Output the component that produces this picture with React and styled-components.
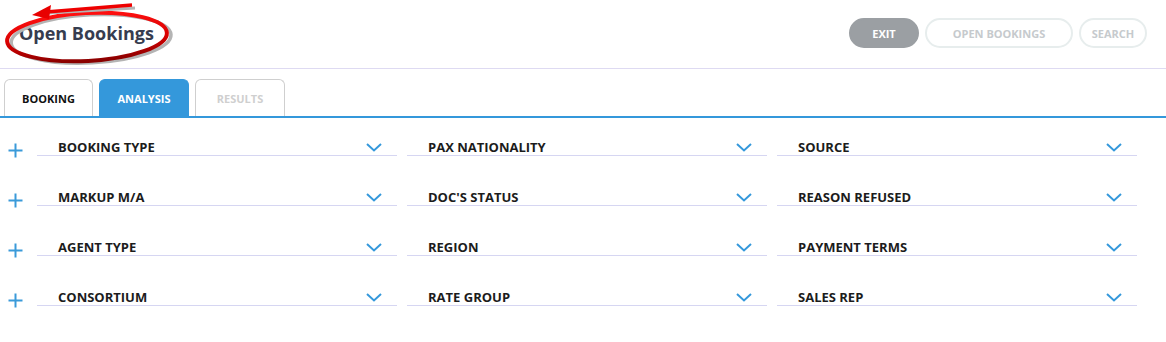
import React from "react";
import styled, { createGlobalStyle } from "styled-components";

const Global = createGlobalStyle`
  html, body { margin: 0; padding: 0; background: #fff; }
  body { font-family: "Open Sans", "Noto Sans", Arial, sans-serif; }
  * { box-sizing: border-box; }
`;

const Page = styled.div`
  width: 1166px;
  height: 342px;
  background: #fff;
  position: relative;
  overflow: hidden;
`;

const Header = styled.header`
  height: 69px;
  display: flex;
  align-items: flex-start;
  justify-content: space-between;
  border-bottom: 1px solid #dedaf2;
  position: relative;
`;

const Title = styled.h1`
  margin: 0;
  padding: 19px 0 0 19px;
  font-size: 18px;
  line-height: 28px;
  font-weight: 700;
  color: #363c4f;
`;

const Annotation = styled.svg`
  position: absolute;
  left: 0;
  top: 0;
  pointer-events: none;
`;

const Actions = styled.div`
  display: flex;
  gap: 6px;
  padding: 18px 19px 0 0;
`;

const Pill = styled.button`
  height: 30px;
  width: ${(p) => p.$w}px;
  padding: 0;
  border-radius: 15px;
  font-family: "Open Sans", Arial, sans-serif;
  font-size: 11px;
  font-weight: 700;
  cursor: pointer;
  border: 2px solid ${(p) => (p.$primary ? "#9b9fa3" : "#e7eded")};
  background: ${(p) => (p.$primary ? "#9b9fa3" : "#fff")};
  color: ${(p) => (p.$primary ? "#fff" : "#c6cacd")};
`;

const Tabs = styled.nav`
  display: flex;
  gap: 6px;
  padding: 10px 0 0 4px;
  border-bottom: 2px solid #3498db;
  height: 49px;
  align-items: flex-end;
`;

const Tab = styled.div`
  width: ${(p) => p.$w}px;
  height: 37px;
  display: flex;
  align-items: center;
  justify-content: center;
  border: 1px solid ${(p) => (p.$active ? "#3498db" : "#cfcfcf")};
  border-bottom: none;
  border-radius: 6px 6px 0 0;
  background: ${(p) => (p.$active ? "#3498db" : "#fff")};
  color: ${(p) => (p.$active ? "#fff" : p.$disabled ? "#cfcfcf" : "#111")};
  font-size: 11px;
  font-weight: 700;
  padding-top: 0;
`;

const Body = styled.section`
  padding-top: 8px;
  display: flex;
  flex-direction: column;
  gap: 20px;
`;

const Row = styled.div`
  display: flex;
  height: 30px;
`;

const PlusCell = styled.div`
  width: 37px;
  display: flex;
  align-items: flex-end;
  padding: 0 0 0 8px;
  margin-bottom: -2px;
`;

const Fields = styled.div`
  display: flex;
  gap: 10px;
`;

const Field = styled.div`
  width: 360px;
  height: 30px;
  display: flex;
  align-items: flex-end;
  justify-content: space-between;
  border-bottom: 1px solid #d6d6f2;
  padding: 0 15px 0 21px;
`;

const Label = styled.span`
  font-size: 13px;
  line-height: 16px;
  font-weight: 700;
  color: #1c1c1c;
`;

const Chevron = styled.svg`
  margin-bottom: 3px;
`;

const PlusIcon = () => (
  <svg width="15" height="15" viewBox="0 0 15 15">
    <path d="M7.5 0.5v14M0.5 7.5h14" stroke="#3a9ad9" strokeWidth="2" fill="none" />
  </svg>
);

const rows = [
  ["BOOKING TYPE", "PAX NATIONALITY", "SOURCE"],
  ["MARKUP M/A", "DOC'S STATUS", "REASON REFUSED"],
  ["AGENT TYPE", "REGION", "PAYMENT TERMS"],
  ["CONSORTIUM", "RATE GROUP", "SALES REP"],
];

export default function App() {
  return (
    <Page>
      <Global />
      <Header>
        <Title>Open Bookings</Title>
        <Actions>
          <Pill $primary $w={70}>EXIT</Pill>
          <Pill $w={148}>OPEN BOOKINGS</Pill>
          <Pill $w={68}>SEARCH</Pill>
        </Actions>
        <Annotation width="185" height="72" viewBox="0 0 185 72">
          <defs>
            <linearGradient id="rg" x1="0" y1="0" x2="0" y2="1">
              <stop offset="0" stopColor="#ff1010" />
              <stop offset="0.55" stopColor="#d80000" />
              <stop offset="1" stopColor="#8a0000" />
            </linearGradient>
          </defs>
          <g transform="rotate(-3 87 37)">
            <ellipse cx="91" cy="39" rx="80" ry="24" fill="none" stroke="#b4b4b4" strokeWidth="3.5" />
            <ellipse cx="87" cy="37" rx="80" ry="24" fill="none" stroke="url(#rg)" strokeWidth="4" />
          </g>
          <path d="M48 13 L135 8" stroke="#b4b4b4" strokeWidth="3" fill="none" />
          <path d="M46 12 L132 5" stroke="#ee0000" strokeWidth="3.5" fill="none" />
          <polygon points="32,15 51,5 49,19" fill="#e80000" />
        </Annotation>
      </Header>
      <Tabs>
        <Tab $w={89}>BOOKING</Tab>
        <Tab $w={90} $active>ANALYSIS</Tab>
        <Tab $w={90} $disabled>RESULTS</Tab>
      </Tabs>
      <Body>
        {rows.map((r, i) => (
          <Row key={i}>
            <PlusCell>
              <PlusIcon />
            </PlusCell>
            <Fields>
              {r.map((label) => (
                <Field key={label}>
                  <Label>{label}</Label>
                  <Chevron width="16" height="9" viewBox="0 0 16 9">
                    <path d="M1 1l7 6.5L15 1" stroke="#3498db" strokeWidth="2" fill="none" />
                  </Chevron>
                </Field>
              ))}
            </Fields>
          </Row>
        ))}
      </Body>
    </Page>
  );
}
